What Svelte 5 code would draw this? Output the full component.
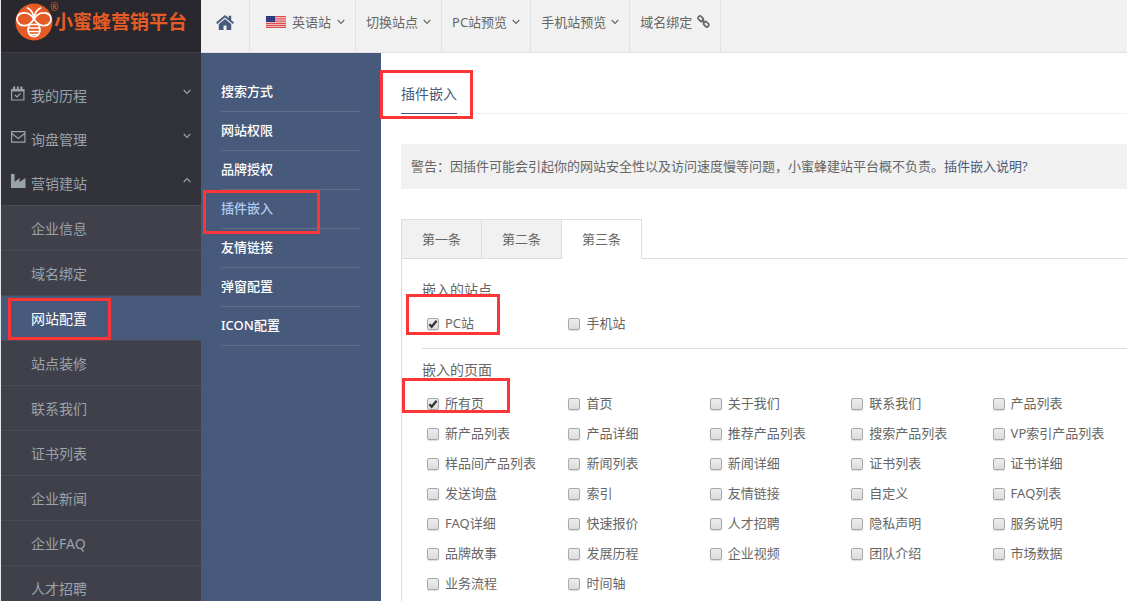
<script>
  const groups = [
    { label: '我的历程', icon: 'calendar', open: false },
    { label: '询盘管理', icon: 'mail', open: false },
    { label: '营销建站', icon: 'industry', open: true }
  ];
  const pagesMenu = ['企业信息', '域名绑定', '网站配置', '站点装修', '联系我们', '证书列表', '企业新闻', '企业FAQ', '人才招聘'];
  const settings = ['搜索方式', '网站权限', '品牌授权', '插件嵌入', '友情链接', '弹窗配置', 'ICON配置'];
  const tabs = ['第一条', '第二条', '第三条'];
  const dropdowns = ['切换站点', 'PC站预览', '手机站预览'];

  let activeTab = $state(2);
  let sites = $state([
    { name: 'PC站', on: true },
    { name: '手机站', on: false }
  ]);
  let pages = $state(
    [
      '所有页', '首页', '关于我们', '联系我们', '产品列表',
      '新产品列表', '产品详细', '推荐产品列表', '搜索产品列表', 'VP索引产品列表',
      '样品间产品列表', '新闻列表', '新闻详细', '证书列表', '证书详细',
      '发送询盘', '索引', '友情链接', '自定义', 'FAQ列表',
      'FAQ详细', '快速报价', '人才招聘', '隐私声明', '服务说明',
      '品牌故事', '发展历程', '企业视频', '团队介绍', '市场数据',
      '业务流程', '时间轴'
    ].map((name, i) => ({ name, on: i === 0 }))
  );
</script>

{#snippet chevron(up)}
  <svg class="chev" class:up width="8" height="6" viewBox="0 0 8 6"><path d="M.7 1 4 4.4 7.3 1" fill="none" stroke="currentColor" stroke-width="1.1" /></svg>
{/snippet}

{#snippet check(item)}
  <label class="check">
    <span class="box">
      <input type="checkbox" bind:checked={item.on} />
      {#if item.on}
        <svg width="12" height="12" viewBox="0 0 12 12"><path d="M2.4 6.2 4.7 8.8 9.6 2.8" fill="none" stroke="#333" stroke-width="2.3" /></svg>
      {/if}
    </span>
    <span class="check-text">{item.name}</span>
  </label>
{/snippet}

<div class="app">
  <aside class="sidebar">
    <a class="brand" href="#home">
      <svg width="38" height="38" viewBox="0 0 38 38">
        <circle cx="19" cy="19" r="18.5" fill="#e65b25" />
        <g fill="none" stroke="#fff" stroke-width="1.7" stroke-linecap="round" stroke-linejoin="round">
          <path d="M18.800 16C15.500 10 10.500 9.500 7 10.200 2 11.300 .8 16 3 19.500 6 24.300 14.500 24 18.800 16Z" />
          <path d="M19.200 16C22.500 10 27.500 9.500 31 10.200 36 11.300 37.200 16 35 19.500 32 24.300 23.500 24 19.200 16Z" />
          <path d="M18.800 15.500C18.500 11 16.500 7 12.500 5M19.200 15.500C19.500 11 21.500 7 25.500 5" />
          <path d="M15 21.500h8M13.200 25h11.600M13.200 28.500h11.600M15 31.500h8" />
          <path d="M15 21.500C12.500 24 12.500 28.500 14.500 31.500 16.500 34.200 21.500 34.200 23.500 31.500 25.500 28.500 25.500 24 23 21.500" />
        </g>
      </svg>
      <span class="brand-name">小蜜蜂营销平台</span>
      <span class="reg">®</span>
    </a>
    <nav class="groups">
      {#each groups as g}
        <button class="group">
          <span class="group-icon">
            {#if g.icon === 'calendar'}
              <svg width="14" height="15" viewBox="0 0 14 15"><path d="M.6 3.500h12.300v10.500H.6z" fill="none" stroke="currentColor" stroke-width="1.200" /><path d="M.2 3h13v2.400H.2zM2 .4h2.200v3H2zM5.800 .4h2v3h-2zM9.300 .4h2.200v3H9.300z" fill="currentColor" /><path d="m4 9 2 2 3.600-3.600" fill="none" stroke="currentColor" stroke-width="1.200" /></svg>
            {:else if g.icon === 'mail'}
              <svg width="15" height="12" viewBox="0 0 15 12"><path d="M.6 .6h13.300v10.600H.6zM.8 2.500 7.200 7.500 13.700 2.500" fill="none" stroke="currentColor" stroke-width="1.200" /></svg>
            {:else}
              <svg width="15" height="14" viewBox="0 0 15 14"><path d="M0 0h3.600v8L8.500 4v4L14.500 4v10H0z" fill="currentColor" /></svg>
            {/if}
          </span>
          <span class="group-label">{g.label}</span>
          <span class="group-chev">{@render chevron(g.open)}</span>
        </button>
      {/each}
    </nav>
    <nav class="sub">
      {#each pagesMenu as p}
        <a href="#page" class:current={p === '网站配置'}>
          {p}
          {#if p === '网站配置'}<i class="mark mark-side"></i>{/if}
        </a>
      {/each}
    </nav>
  </aside>

  <div class="workspace">
    <header class="topbar">
      <a class="home" href="#home" aria-label="首页">
        <svg width="18" height="15" viewBox="0 0 18 15"><path d="M9 0 0 7.600l1.200 1.400L9 2.500 16.800 9 18 7.600l-2.800-2.400V.8h-2.500v2.300z" fill="currentColor" /><path d="M9 4 2.800 9.100V15h4.700v-4.500h3V15h4.700V9.100z" fill="currentColor" /></svg>
      </a>
      <button class="drop lang">
        <svg class="flag" width="20" height="12" viewBox="0 0 20 12">
          <path fill="#f6dcdc" d="M0 0h20v12H0z" />
          <path stroke="#dc4e52" stroke-width="1.200" d="M0 .6h20M0 2.900h20M0 5.200h20M0 7.300h20M0 9.400h20M0 11.400h20" />
          <path fill="#2b2f7d" d="M0 0h9v6H0z" />
          <path stroke="#777cb3" stroke-width=".6" stroke-dasharray=".7 1" d="M.7 1.300h8M1.300 3h7M.7 4.700h8" />
        </svg>
        英语站{@render chevron(false)}
      </button>
      {#each dropdowns as d}
        <button class="drop">{d}{@render chevron(false)}</button>
      {/each}
      <a class="drop link" href="#domain">域名绑定
        <svg width="13" height="13" viewBox="0 0 13 13"><g fill="none" stroke="currentColor" stroke-width="1.700"><rect x="-2.900" y="-1.900" width="5.800" height="3.800" rx="1.700" transform="translate(3.700 3.700) rotate(45)" /><rect x="-2.900" y="-1.900" width="5.800" height="3.800" rx="1.700" transform="translate(9.100 9.200) rotate(45)" /><path d="m4.700 4.700 3.500 3.500" /></g></svg>
      </a>
    </header>

    <div class="body">
      <nav class="settings">
        {#each settings as s}
          <a href="#setting" class:current={s === '插件嵌入'}>
            {s}
            {#if s === '插件嵌入'}<i class="mark mark-setting"></i>{/if}
          </a>
        {/each}
      </nav>

      <main>
        <div class="title"><h1>插件嵌入<i class="mark mark-title"></i></h1></div>
        <p class="warning">警告：因插件可能会引起你的网站安全性以及访问速度慢等问题，小蜜蜂建站平台概不负责。<a href="#help">插件嵌入说明?</a></p>

        <div class="tabs" role="tablist">
          {#each tabs as t, i}
            <button role="tab" aria-selected={i === activeTab} class:active={i === activeTab} onclick={() => (activeTab = i)}>{t}</button>
          {/each}
        </div>
        <div class="panel">
          <section>
            <h2>嵌入的站点</h2>
            <div class="options">
              {#each sites as item}{@render check(item)}{/each}
            </div>
            <i class="mark mark-site"></i>
          </section>
          <section>
            <h2>嵌入的页面</h2>
            <div class="options">
              {#each pages as item}{@render check(item)}{/each}
            </div>
            <i class="mark mark-page"></i>
          </section>
        </div>
      </main>
    </div>
  </div>
</div>

<style>
  :global(body) { background: #fff; }
  .app {
    display: flex;
    height: 100vh;
    overflow: hidden;
    box-sizing: border-box;
    border-left: 1px solid #e4e7e7;
    color: #666;
    font: 13px/20px "Noto Sans", "Noto Sans CJK SC", sans-serif;
  }
  .app * { box-sizing: border-box; }
  a { color: inherit; text-decoration: none; }
  button { margin: 0; padding: 0; border: 0; background: none; color: inherit; font: inherit; cursor: pointer; }
  svg { display: block; flex: none; }
  h1, h2, p { margin: 0; font-weight: 400; }

  .mark { position: absolute; border: 3px solid #fc3636; pointer-events: none; z-index: 2; }

  .sidebar { flex: none; width: 200px; background: #32323a; color: #99a3aa; font-size: 14px; }
  .brand {
    position: relative;
    display: flex;
    align-items: center;
    gap: 1px;
    height: 53px;
    padding: 0 0 9px 14px;
    background: #28282e;
    border-bottom: 1px solid #3d3d45;
    color: #e65b25;
    white-space: nowrap;
  }
  .brand-name { font-size: 19px; font-weight: 700; line-height: 20px; }
  .reg { position: absolute; left: 49px; top: 2px; font-size: 10px; line-height: 10px; }
  .groups { padding-top: 20px; }
  .group { display: flex; align-items: center; width: 100%; height: 44px; padding: 0 10px; text-align: left; }
  .group-icon { width: 20px; padding-bottom: 4px; }
  .group-label { flex: 1; padding-top: 2px; }
  .group-chev { padding-bottom: 6px; }
  .up { transform: rotate(180deg); }
  .sub a {
    position: relative;
    display: block;
    height: 45px;
    padding: 2px 0 0 30px;
    border-top: 1px solid #4b4b57;
    background: #40404a;
    line-height: 42px;
  }
  .sub .current { background: #485a7b; color: #fff; }
  .mark-side { left: 7px; top: 2px; width: 103px; height: 42px; }

  .workspace { flex: 1; min-width: 0; display: flex; flex-direction: column; }
  .topbar { display: flex; height: 53px; background: #f1f1f1; border-bottom: 1px solid #e1e1e1; }
  .home, .drop { display: flex; align-items: center; border-right: 1px solid #e1e1e1; padding: 0 10px 9px; white-space: nowrap; }
  .home { padding: 0 15px 8px; color: #485a7b; }
  .drop { gap: 5px; }
  .lang { padding-left: 16px; gap: 6px; }
  .body { flex: 1; display: flex; min-height: 0; }

  .settings { flex: none; width: 180px; padding: 20px 20px 0; background: #485a7b; color: #fff; }
  .settings a { position: relative; display: block; height: 39px; border-bottom: 1px solid #5e6e8b; font-weight: 500; line-height: 36px; }
  .settings .current { color: #aecbf4; }
  .mark-setting { left: -18px; top: 0; width: 117px; height: 44px; }

  main { flex: 1; min-width: 0; padding: 20px 0 0 20px; }
  .title { height: 41px; border-bottom: 1px solid #f0f0f0; }
  h1 { position: relative; display: inline-block; height: 41px; border-bottom: 1px solid #485a7b; color: #485a7b; font-size: 14px; line-height: 42px; }
  .mark-title { left: -21px; top: -3px; width: 93px; height: 49px; }
  .warning { margin-top: 30px; padding: 0 10px; background: #f1f1f1; line-height: 45px; white-space: nowrap; overflow: hidden; }
  .warning a { color: #485a7b; }

  .tabs { display: flex; margin-top: 30px; padding-left: 1px; box-shadow: inset 0 -1px #ddd; }
  .tabs button { width: 80px; height: 40px; border: solid #ddd; border-width: 1px 1px 1px 0; background: #f1f1f1; }
  .tabs button:first-child { width: 81px; margin-left: -1px; border-left-width: 1px; }
  .tabs .active { background: #fff; border-bottom-color: #fff; }
  .panel { min-height: 400px; padding: 16px 0 0 20px; border-left: 1px solid #ddd; }
  section { position: relative; }
  section + section { margin-top: 9px; padding-top: 6px; border-top: 1px solid #ddd; }
  h2 { margin-bottom: 4px; font-size: 14px; line-height: 30px; }
  .options { display: grid; grid-template-columns: repeat(5, minmax(0, 1fr)); margin-right: -2px; }
  .check { display: flex; align-items: center; gap: 6px; height: 30px; padding-left: 5px; white-space: nowrap; }
  .check-text { padding-bottom: 2px; }
  .box { display: grid; }
  .box > * { grid-area: 1 / 1; }
  .box svg { pointer-events: none; }
  input {
    appearance: none;
    width: 12px;
    height: 12px;
    margin: 0;
    border: 1px solid #a8a8a8;
    border-radius: 2px;
    background: linear-gradient(#ededed, #dcdcdc);
    box-shadow: 0 1px 1px #ddd;
  }
  .mark-site { left: -16px; top: 19px; width: 94px; height: 41px; }
  .mark-page { left: -20px; top: 29px; width: 108px; height: 35px; }
</style>
